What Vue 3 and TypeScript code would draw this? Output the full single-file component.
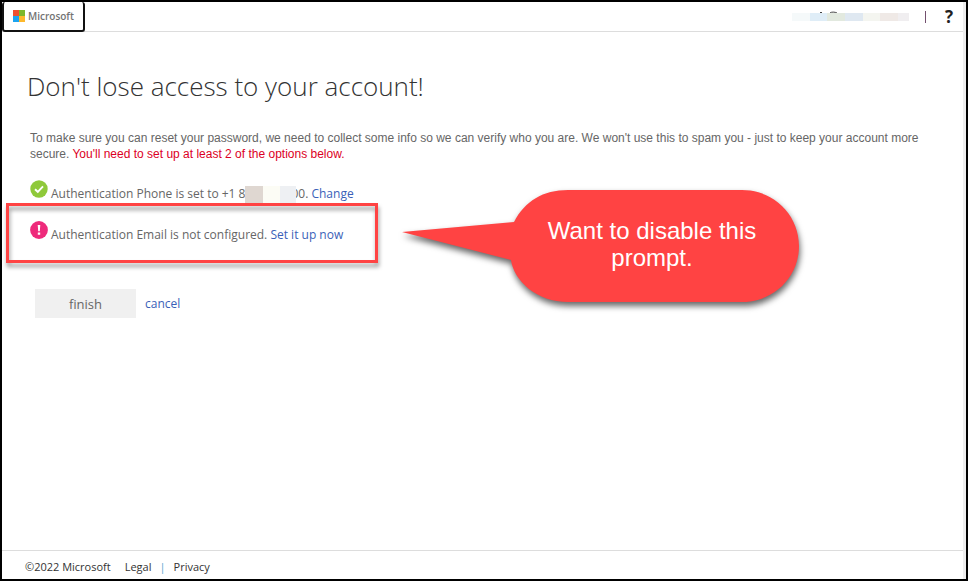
<script setup lang="ts">
interface Block {
  x: number
  width: number
  fill: string
}

const accountBlocks: Block[] = [
  { x: 0, width: 18, fill: '#f5f9fa' },
  { x: 18, width: 17, fill: '#dfedf7' },
  { x: 35, width: 18, fill: '#e2e9df' },
  { x: 53, width: 18, fill: '#dfe8f1' },
  { x: 71, width: 17, fill: '#f4f5f0' },
  { x: 88, width: 18, fill: '#efe9e6' },
  { x: 106, width: 11, fill: '#f0eef0' },
]

const phoneBlocks: Block[] = [
  { x: 0, width: 18, fill: '#dfd7d1' },
  { x: 18, width: 17, fill: '#fcfcf5' },
  { x: 35, width: 16, fill: '#eef0f3' },
]
</script>

<template>
  <div class="page">
    <header class="topbar">
      <a class="brand" href="#">
        <svg class="brand-mark" width="12" height="12" viewBox="0 0 12 12" aria-hidden="true">
          <rect width="6" height="6" fill="#f05030" />
          <rect x="6" width="6" height="6" fill="#7db72b" />
          <rect y="6" width="6" height="6" fill="#1ca4f0" />
          <rect x="6" y="6" width="6" height="6" fill="#fdb82c" />
        </svg>
        <span>Microsoft</span>
      </a>
      <div class="tools">
        <svg class="account" width="117" height="12" viewBox="0 0 117 12" role="img" aria-label="Account">
          <path d="M28 1.5h2M38 2c1-1.2 5-1.2 7 0" fill="none" stroke="#444" stroke-width="1" />
          <rect v-for="b in accountBlocks" :key="b.x" :x="b.x" y="2" :width="b.width" height="8" :fill="b.fill" />
        </svg>
        <span class="divider"></span>
        <button class="help" type="button" aria-label="Help">?</button>
      </div>
    </header>

    <main class="content">
      <h1>Don't lose access to your account!</h1>
      <p class="intro">
        To make sure you can reset your password, we need to collect some info so we can verify who you are. We won't use this to spam you - just to keep your account more secure.
        <span class="warning">You'll need to set up at least 2 of the options below.</span>
      </p>

      <ul class="methods">
        <li class="method">
          <svg class="status" width="18" height="18" viewBox="0 0 18 18" aria-hidden="true">
            <circle cx="9" cy="9" r="8.7" fill="#8fc93a" />
            <path d="M5 9.2l2.8 2.6L13 6.3" fill="none" stroke="#fff" stroke-width="1.9" />
          </svg>
          <span class="label">Authentication Phone is set to +1 8<svg class="mask" width="51" height="17" viewBox="0 0 51 17" aria-hidden="true"><rect v-for="b in phoneBlocks" :key="b.x" :x="b.x" :width="b.width" height="17" :fill="b.fill" /></svg>00. <a href="#">Change</a></span>
        </li>
        <li class="method flagged">
          <svg class="status" width="18" height="18" viewBox="0 0 18 18" aria-hidden="true">
            <circle cx="9" cy="9" r="8.9" fill="#ee2a7b" />
            <path d="M7.7 4h2.6l-.5 6.2H8.2zM7.8 11.4h2.4v2.4H7.8z" fill="#fff" />
          </svg>
          <span class="label">Authentication Email is not configured. <a href="#">Set it up now</a></span>
        </li>
      </ul>

      <div class="actions">
        <button class="finish" type="button">finish</button>
        <a href="#">cancel</a>
      </div>
    </main>

    <aside class="callout">
      <svg class="bubble" width="400" height="114" viewBox="0 0 400 114" aria-hidden="true">
        <path d="M1 42L113 32C124 11 142 0 167 0H341C373 0 398 25 398 56S373 112 341 112H167C136 112 113 91 110 70Z" fill="#ff4343" />
      </svg>
      <p>Want to disable this prompt.</p>
    </aside>

    <footer class="footer">
      <span>©2022 Microsoft</span>
      <nav class="legal">
        <a href="#">Legal</a>
        <span class="bar">|</span>
        <a href="#">Privacy</a>
      </nav>
    </footer>
  </div>
</template>

<style>
body {
  background: #fff;
}
</style>

<style scoped>
.page {
  position: relative;
  box-sizing: border-box;
  min-height: 100vh;
  display: flex;
  flex-direction: column;
  border: 2px solid #000;
  box-shadow: inset -3px 0 #eee;
  padding-right: 3px;
  font-family: "Open Sans", sans-serif;
  font-size: 12px;
  line-height: 16px;
  color: #666;
}
a {
  color: #3a5fb8;
  text-decoration: none;
}
.topbar {
  display: flex;
  justify-content: space-between;
  height: 29px;
  border-bottom: 1px solid #ddd;
}
.brand {
  box-sizing: border-box;
  display: flex;
  align-items: center;
  gap: 3px;
  width: 83px;
  height: 30px;
  padding-left: 9px;
  border: 2px solid #111;
  border-top-width: 0;
  border-radius: 3px;
  background: #fff;
  color: #737373;
  font-size: 10px;
  font-weight: 600;
}
.tools {
  display: flex;
  align-items: center;
  padding-right: 8px;
}
.divider {
  width: 1px;
  height: 12px;
  margin: 0 17px 0 16px;
  background: #73506e;
}
.help {
  border: 0;
  padding: 0;
  width: 12px;
  background: none;
  color: #222;
  font: 700 17px/24px "Open Sans", sans-serif;
}
.content {
  flex: 1;
  padding: 36px 24px 24px 28px;
}
h1 {
  margin: 0 0 26px -3px;
  font-size: 26px;
  font-weight: 300;
  line-height: 36px;
  color: #333;
}
.intro {
  margin: 0;
  font-family: "Liberation Sans", Arial, sans-serif;
}
.warning {
  color: #dc0024;
}
.methods {
  list-style: none;
  margin: 18px 0 0;
  padding: 0;
}
.method {
  display: flex;
  gap: 3px;
  height: 41px;
}
.status {
  flex: none;
}
.label {
  padding-top: 6px;
}
.mask {
  position: relative;
  margin-right: -5px;
  vertical-align: top;
}
.flagged {
  position: relative;
}
.flagged::after {
  content: "";
  position: absolute;
  box-sizing: border-box;
  top: -18px;
  left: -24px;
  width: 372px;
  height: 60px;
  border: 3px solid #ff4343;
  filter: drop-shadow(1px 4px 2px rgba(0, 0, 0, 0.4));
  pointer-events: none;
}
.actions {
  display: flex;
  align-items: center;
  gap: 9px;
  padding: 27px 0 0 5px;
}
.finish {
  width: 101px;
  height: 29px;
  border: 0;
  padding: 0;
  background: #f0f0f0;
  color: #666;
  font: 13px/20px "Open Sans", sans-serif;
}
.callout {
  position: absolute;
  top: 188px;
  left: 399px;
  width: 400px;
}
.bubble {
  display: block;
  overflow: visible;
  filter: drop-shadow(1px 4px 3px rgba(0, 0, 0, 0.6));
}
.callout p {
  position: absolute;
  top: 27px;
  left: 131px;
  width: 240px;
  margin: 0;
  color: #fff;
  font: 24px/27px "Liberation Sans", Arial, sans-serif;
  text-align: center;
}
.footer {
  display: flex;
  gap: 14px;
  padding: 8px 23px 4px;
  border-top: 1px solid #ddd;
  font-size: 11px;
  color: #333;
}
.legal {
  display: flex;
  gap: 8px;
}
.legal a {
  color: #333;
}
.bar {
  color: #58a6cf;
}
</style>
